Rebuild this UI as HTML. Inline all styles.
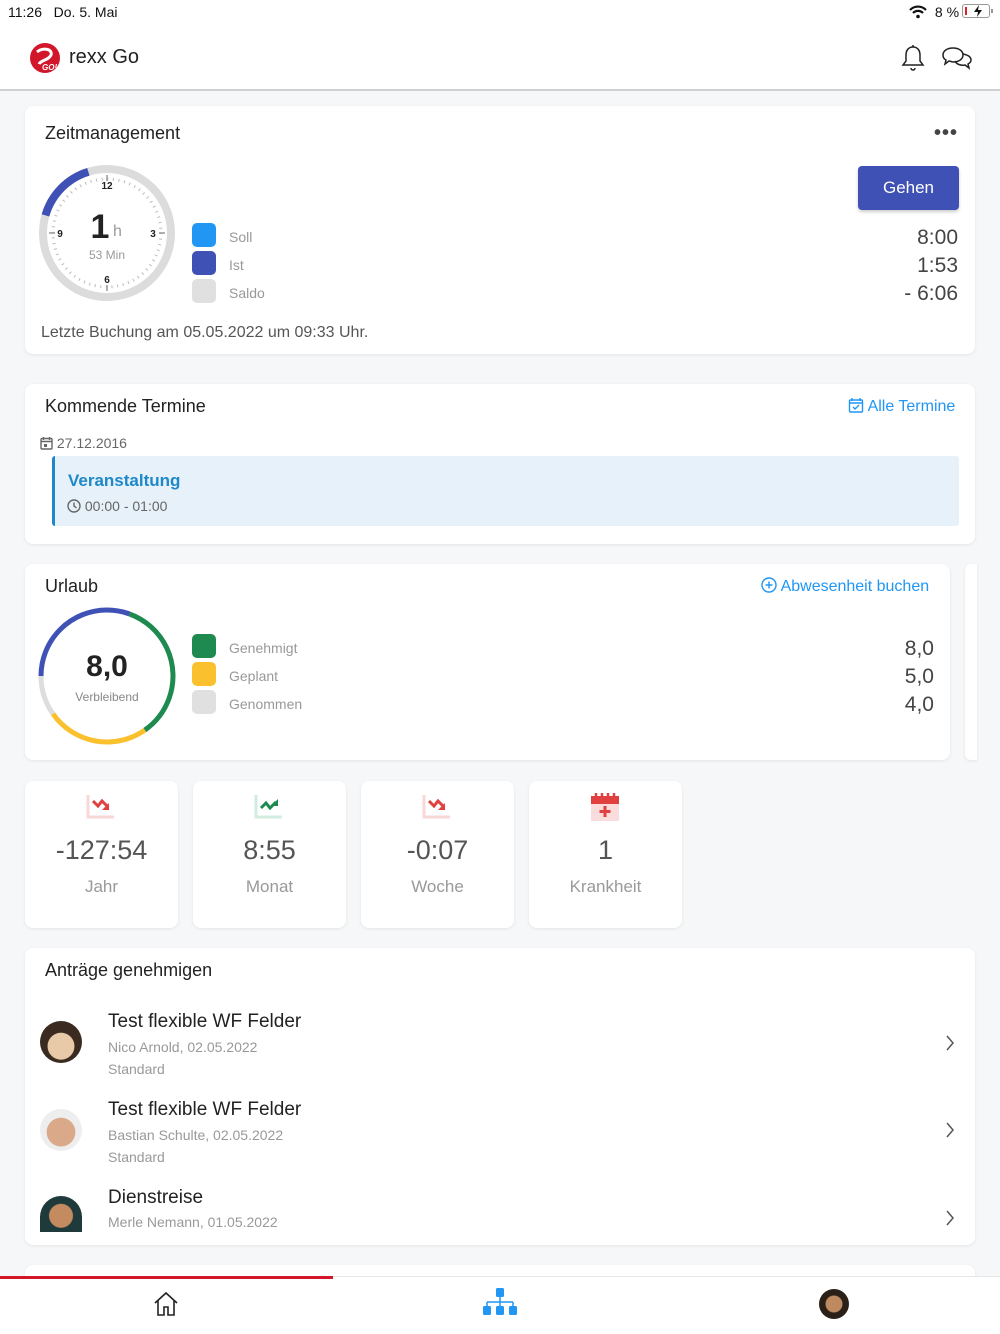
<!DOCTYPE html>
<html><head><meta charset="utf-8">
<style>
*{box-sizing:border-box;margin:0;padding:0}
body{width:1000px;height:1334px;background:#f6f7f8;font-family:"Liberation Sans",Arial,sans-serif;color:#222;position:relative;overflow:hidden}
.abs{position:absolute}
.card{position:absolute;background:#fff;border-radius:8px;box-shadow:0 1px 3px rgba(0,0,0,.08)}
.title{position:absolute;font-size:18px;color:#222}
.sq{position:absolute;width:24px;height:24px;border-radius:5px}
.lg{position:absolute;font-size:14px;color:#999}
.tile{position:absolute;top:781px;width:153px;height:147px;background:#fff;border-radius:8px;box-shadow:0 1px 3px rgba(0,0,0,.08);text-align:center}
.tile .v{position:absolute;top:54px;width:100%;font-size:27px;color:#555}
.tile .l{position:absolute;top:96px;width:100%;font-size:17px;color:#999}
.tile svg{position:absolute;top:12px;left:60px}
.item .t{position:absolute;left:108px;font-size:19px;color:#222}
.item .s{position:absolute;left:108px;font-size:14px;color:#999}
.av{position:absolute;left:40px;width:42px;height:42px;border-radius:50%}
.chev{position:absolute;left:944px}
</style></head><body>
<div class="abs" style="left:0;top:0;width:1000px;height:24px;background:#fff"></div>
<div class="abs" style="left:8px;top:4px;font-size:14px;color:#111">11:26&nbsp;&nbsp; Do. 5. Mai</div>
<div class="abs" style="left:908px;top:4px;font-size:14px;color:#111">
<svg width="20" height="14" viewBox="0 0 20 14" style="vertical-align:-2px"><path d="M2 5a11 11 0 0 1 16 0" stroke="#111" stroke-width="2.2" fill="none"/><path d="M5 8a7 7 0 0 1 10 0" stroke="#111" stroke-width="2.2" fill="none"/><circle cx="10" cy="11.5" r="1.8" fill="#111"/></svg>
<span style="margin-left:3px">8 %</span></div>
<div class="abs" style="left:962px;top:4px;width:28px;height:14px;border:1px solid #999;border-radius:3px"><div style="position:absolute;left:2px;top:2px;width:2px;height:8px;background:#e02020"></div><svg width="14" height="12" style="position:absolute;left:8px;top:0"><path d="M8 0L3 7h4l-1 5 5-7H7z" fill="#111"/></svg></div>
<div class="abs" style="left:991px;top:9px;width:2px;height:4px;background:#999"></div>
<div class="abs" style="left:0;top:24px;width:1000px;height:67px;background:#fff;border-bottom:2px solid #d0d0d0"></div>
<svg class="abs" style="left:29px;top:42px" width="32" height="32" viewBox="0 0 32 32"><circle cx="16" cy="16" r="15" fill="#d3172a"/><path d="M8 10c6-5 16-3 14 3-2 5-10 5-12 9" stroke="#fff" stroke-width="3" fill="none"/><text x="13" y="28" font-size="8" font-style="italic" font-weight="bold" fill="#fff" font-family="Liberation Sans">GO!</text></svg>
<div class="abs" style="left:69px;top:46px;font-size:20px;color:#222">rexx Go</div>
<svg class="abs" style="left:900px;top:44px" width="26" height="28" viewBox="0 0 26 28"><path d="M13 3c-5 0-7 4-7 8v6l-3 4h20l-3-4v-6c0-4-2-8-7-8z" stroke="#222" stroke-width="1.5" fill="none"/><path d="M13 1v2M11 24a2 2 0 0 0 4 0" stroke="#222" stroke-width="1.5" fill="none"/></svg>
<svg class="abs" style="left:941px;top:46px" width="32" height="26" viewBox="0 0 32 26"><path d="M12 2c-6 0-10 3-10 7 0 2 1 4 3 5l-1 4 4-3c1 0 3 1 4 1 6 0 10-3 10-7s-4-7-10-7z" stroke="#222" stroke-width="1.5" fill="none"/><path d="M22 8c5 1 8 3 8 6 0 2-1 3-3 4l1 4-4-3c-4 1-9-1-10-4" stroke="#222" stroke-width="1.5" fill="none"/></svg>

<div class="card" style="left:25px;top:106px;width:950px;height:248px"></div>
<div class="title" style="left:45px;top:123px">Zeitmanagement</div>
<div class="abs" style="left:934px;top:122px;font-size:20px;color:#444;letter-spacing:1px;font-weight:bold">•••</div>
<svg class="abs" style="left:37px;top:163px" width="140" height="140" viewBox="0 0 140 140">
<circle cx="70" cy="70" r="64" stroke="#dcdcdc" stroke-width="8" fill="none"/>
<circle cx="70" cy="70" r="64" stroke="#3f51b5" stroke-width="8" fill="none" stroke-dasharray="63.7 402" transform="rotate(196 70 70)"/>
<circle cx="70" cy="70" r="54" stroke="#bbb" stroke-width="3" fill="none" stroke-dasharray="1 4.655"/>
<path d="M70 12v6M70 122v6M12 70h6M122 70h6" stroke="#999" stroke-width="1.5"/>
<text x="70" y="26" font-size="10" font-weight="bold" text-anchor="middle" fill="#222">12</text>
<text x="70" y="120" font-size="10" font-weight="bold" text-anchor="middle" fill="#222">6</text>
<text x="23" y="74" font-size="10" font-weight="bold" text-anchor="middle" fill="#222">9</text>
<text x="116" y="74" font-size="10" font-weight="bold" text-anchor="middle" fill="#222">3</text>
<text x="63" y="75" font-size="34" font-weight="bold" text-anchor="middle" fill="#222">1</text>
<text x="76" y="73" font-size="16" fill="#999">h</text>
<text x="70" y="96" font-size="12" text-anchor="middle" fill="#999">53 Min</text>
</svg>
<div class="sq" style="left:192px;top:223px;background:#2196f3"></div>
<div class="sq" style="left:192px;top:251px;background:#3f51b5"></div>
<div class="sq" style="left:192px;top:279px;background:#e0e0e0"></div>
<div class="lg" style="left:229px;top:229px">Soll</div>
<div class="lg" style="left:229px;top:257px">Ist</div>
<div class="lg" style="left:229px;top:285px">Saldo</div>
<div class="abs" style="left:858px;top:166px;width:101px;height:44px;background:#3f51b5;border-radius:4px;color:#fff;font-size:17px;text-align:center;line-height:44px;box-shadow:0 2px 3px rgba(0,0,0,.2)">Gehen</div>
<div class="abs" style="left:800px;top:224px;width:158px;text-align:right;font-size:21px;color:#444;line-height:28px">8:00<br>1:53<br>- 6:06</div>
<div class="abs" style="left:41px;top:324px;font-size:16px;color:#555">Letzte Buchung am 05.05.2022 um 09:33 Uhr.</div>

<div class="card" style="left:25px;top:384px;width:950px;height:160px"></div>
<div class="title" style="left:45px;top:396px">Kommende Termine</div>
<div class="abs" style="left:848px;top:397px;font-size:16px;color:#2196f3"><svg width="16" height="16" viewBox="0 0 16 16" style="vertical-align:-2px"><rect x="1.5" y="3" width="13" height="12" rx="1" stroke="#2196f3" stroke-width="1.4" fill="none"/><path d="M4 1v3M12 1v3M1.5 6h13M5 10l2 2 4-4" stroke="#2196f3" stroke-width="1.4" fill="none"/></svg> Alle Termine</div>
<div class="abs" style="left:40px;top:435px;font-size:14px;color:#666"><svg width="13" height="14" viewBox="0 0 13 14" style="vertical-align:-2px"><rect x="1" y="2.5" width="11" height="10.5" rx="1" stroke="#666" stroke-width="1.4" fill="none"/><path d="M3.5 1v3M9.5 1v3M1 5.5h11" stroke="#666" stroke-width="1.4"/><rect x="4" y="8" width="3" height="3" fill="#666"/></svg> 27.12.2016</div>
<div class="abs" style="left:52px;top:456px;width:907px;height:70px;background:#e6f1f9;border-radius:3px;border-left:3px solid #1e88c8"></div>
<div class="abs" style="left:68px;top:471px;font-size:17px;font-weight:bold;color:#1e88c8">Veranstaltung</div>
<div class="abs" style="left:67px;top:498px;font-size:14px;color:#666"><svg width="14" height="14" viewBox="0 0 14 14" style="vertical-align:-2px"><circle cx="7" cy="7" r="6" stroke="#666" stroke-width="1.4" fill="none"/><path d="M7 3.5V7l2.5 2" stroke="#666" stroke-width="1.4" fill="none"/></svg> 00:00 - 01:00</div>

<div class="card" style="left:25px;top:564px;width:925px;height:196px"></div>
<div class="card" style="left:965px;top:564px;width:12px;height:196px;border-radius:6px 0 0 6px"></div>
<div class="title" style="left:45px;top:576px">Urlaub</div>
<div class="abs" style="left:761px;top:577px;font-size:16px;color:#2196f3"><svg width="16" height="16" viewBox="0 0 16 16" style="vertical-align:-2px"><circle cx="8" cy="8" r="7" stroke="#2196f3" stroke-width="1.4" fill="none"/><path d="M8 4.5v7M4.5 8h7" stroke="#2196f3" stroke-width="1.4"/></svg> Abwesenheit buchen</div>
<svg class="abs" style="left:37px;top:606px" width="140" height="140" viewBox="0 0 140 140">
<g fill="none" stroke-width="5">
<circle cx="70" cy="70" r="66" stroke="#3f51b5" stroke-dasharray="126.7 415" transform="rotate(180 70 70)"/>
<circle cx="70" cy="70" r="66" stroke="#1e8a4f" stroke-dasharray="144 415" transform="rotate(-70 70 70)"/>
<circle cx="70" cy="70" r="66" stroke="#fbc02d" stroke-dasharray="103.7 415" transform="rotate(55 70 70)"/>
<circle cx="70" cy="70" r="66" stroke="#dddddd" stroke-dasharray="40.3 415" transform="rotate(145 70 70)"/>
</g>
<text x="70" y="70" font-size="30" font-weight="bold" text-anchor="middle" fill="#222">8,0</text>
<text x="70" y="95" font-size="12" text-anchor="middle" fill="#888">Verbleibend</text>
</svg>
<div class="sq" style="left:192px;top:634px;background:#1e8a4f"></div>
<div class="sq" style="left:192px;top:662px;background:#fbc02d"></div>
<div class="sq" style="left:192px;top:690px;background:#e0e0e0"></div>
<div class="lg" style="left:229px;top:640px">Genehmigt</div>
<div class="lg" style="left:229px;top:668px">Geplant</div>
<div class="lg" style="left:229px;top:696px">Genommen</div>
<div class="abs" style="left:800px;top:635px;width:134px;text-align:right;font-size:21px;color:#444;line-height:28px">8,0<br>5,0<br>4,0</div>

<div class="tile" style="left:25px"><svg width="32" height="28" viewBox="0 0 32 28"><path d="M3 2v22h26" stroke="#f8d7d7" stroke-width="3" fill="none"/><path d="M8 8l5 5 4-5 6 6" stroke="#e04040" stroke-width="3" fill="none"/><path d="M24 10v7h-7z" fill="#e04040"/></svg><div class="v">-127:54</div><div class="l">Jahr</div></div>
<div class="tile" style="left:193px"><svg width="32" height="28" viewBox="0 0 32 28"><path d="M3 2v22h26" stroke="#d3ece0" stroke-width="3" fill="none"/><path d="M8 15l5-5 4 5 6-6" stroke="#1e8a4f" stroke-width="3" fill="none"/><path d="M25 6v7h-7z" fill="#1e8a4f"/></svg><div class="v">8:55</div><div class="l">Monat</div></div>
<div class="tile" style="left:361px"><svg width="32" height="28" viewBox="0 0 32 28"><path d="M3 2v22h26" stroke="#f8d7d7" stroke-width="3" fill="none"/><path d="M8 8l5 5 4-5 6 6" stroke="#e04040" stroke-width="3" fill="none"/><path d="M24 10v7h-7z" fill="#e04040"/></svg><div class="v">-0:07</div><div class="l">Woche</div></div>
<div class="tile" style="left:529px"><svg width="32" height="28" viewBox="0 0 32 28"><rect x="2" y="8" width="28" height="20" fill="#fadcdc"/><rect x="2" y="3" width="28" height="8" fill="#e04040"/><path d="M7 0v5M13 0v5M19 0v5M25 0v5" stroke="#e04040" stroke-width="2.5"/><path d="M16 13v11M10.5 18.5h11" stroke="#e04040" stroke-width="3"/></svg><div class="v">1</div><div class="l">Krankheit</div></div>

<div class="card" style="left:25px;top:948px;width:950px;height:297px"></div>
<div class="title" style="left:45px;top:960px">Anträge genehmigen</div>
<div class="item">
<div class="av" style="top:1021px;background:radial-gradient(circle at 50% 60%,#e8c9a8 40%,#3a2a20 42%);"></div>
<div class="t" style="top:1011px">Test flexible WF Felder</div>
<div class="s" style="top:1039px">Nico Arnold, 02.05.2022</div>
<div class="s" style="top:1061px">Standard</div>
<svg class="chev" style="top:1035px" width="12" height="16"><path d="M3 1l6 7-6 7" stroke="#555" stroke-width="1.5" fill="none"/></svg>
<div class="av" style="top:1109px;background:radial-gradient(circle at 50% 55%,#d9a98a 45%,#eee 47%);"></div>
<div class="t" style="top:1099px">Test flexible WF Felder</div>
<div class="s" style="top:1127px">Bastian Schulte, 02.05.2022</div>
<div class="s" style="top:1149px">Standard</div>
<svg class="chev" style="top:1122px" width="12" height="16"><path d="M3 1l6 7-6 7" stroke="#555" stroke-width="1.5" fill="none"/></svg>
<div class="av" style="top:1196px;height:36px;border-radius:21px 21px 0 0;background:radial-gradient(circle at 50% 55%,#c48a60 40%,#1e3a3a 43%);"></div>
<div class="t" style="top:1187px">Dienstreise</div>
<div class="s" style="top:1214px">Merle Nemann, 01.05.2022</div>
<svg class="chev" style="top:1210px" width="12" height="16"><path d="M3 1l6 7-6 7" stroke="#555" stroke-width="1.5" fill="none"/></svg>
</div>
<div class="card" style="left:25px;top:1265px;width:950px;height:40px"></div>

<div class="abs" style="left:0;top:1276px;width:1000px;height:58px;background:#fff;border-top:1px solid #e6e6e6"></div>
<div class="abs" style="left:0;top:1276px;width:333px;height:3px;background:#d3172a"></div>
<svg class="abs" style="left:153px;top:1291px" width="26" height="26" viewBox="0 0 26 26"><path d="M2 12L13 2l11 10M5 9v15h6v-8h4v8h6V9" stroke="#222" stroke-width="1.6" fill="none"/></svg>
<svg class="abs" style="left:482px;top:1288px" width="36" height="30" viewBox="0 0 36 30"><rect x="14" y="0" width="8" height="9" rx="1.5" fill="#2196f3"/><path d="M18 9v5M5 14h26M5 14v4M18 14v4M31 14v4" stroke="#2196f3" stroke-width="1.5" fill="none"/><rect x="1" y="18" width="8" height="9" rx="1.5" fill="#2196f3"/><rect x="14" y="18" width="8" height="9" rx="1.5" fill="#2196f3"/><rect x="27" y="18" width="8" height="9" rx="1.5" fill="#2196f3"/></svg>
<div class="abs" style="left:819px;top:1289px;width:30px;height:30px;border-radius:50%;background:radial-gradient(circle at 50% 50%,#c08a60 38%,#2a2018 42%)"></div>
</body></html>
